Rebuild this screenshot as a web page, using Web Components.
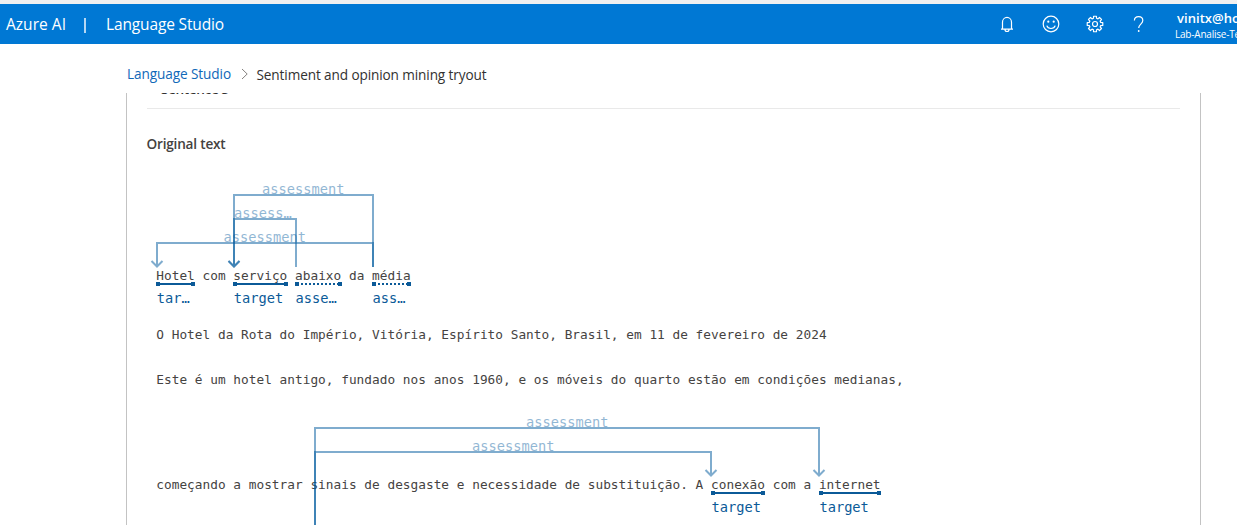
<!DOCTYPE html>
<html lang="en">
<head>
<meta charset="utf-8">
<title>Language Studio</title>
<style>
html,body{margin:0;height:100%;overflow:hidden;background:#fff}
body{font-family:"Open Sans","Noto Sans",sans-serif;color:#323130}
</style>
</head>
<body>
<studio-page></studio-page>
<script>
const define = (name, html, setup) => {
  const t = document.createElement('template');
  t.innerHTML = html;
  customElements.define(name, class extends HTMLElement {
    constructor() {
      super();
      this.attachShadow({mode: 'open'}).appendChild(t.content.cloneNode(true));
    }
    connectedCallback() { if (setup) setup(this, this.shadowRoot); }
  });
};

// One line of text whose tracking is adjusted to a given width.
define('fit-text', `<style>:host{display:block;white-space:pre;flex:none}span{display:inline-block}</style><span><slot></slot></span>`,
  (el, root) => {
    const span = root.querySelector('span');
    const want = +el.getAttribute('w');
    if (!want) return;
    const n = el.textContent.length;
    const have = span.getBoundingClientRect().width;
    if (have) span.style.letterSpacing = ((want - have) / n) + 'px';
  });

define('tool-icon', `<style>:host{display:flex;width:44px;height:40px;align-items:center;justify-content:center}svg{width:20px;height:20px;fill:none;stroke:#fff;stroke-width:1.2;overflow:visible}</style><svg viewBox="0 0 20 20"></svg>`,
  (el, root) => {
    const shapes = {
      bell: '<path d="M5.5 15V8.2a4.5 4.8 0 0 1 9 0V15M4 15.2h12M8 15.5a2 2 0 0 0 4 0"/>',
      smile: '<circle cx="10" cy="10" r="7.8"/><path d="M5.8 11.6a4.4 4.1 0 0 0 8.4 0"/><circle cx="7.3" cy="7.7" r="1.1" fill="#fff" stroke="none"/><circle cx="12.7" cy="7.7" r="1.1" fill="#fff" stroke="none"/>',
      help: '<path d="M5.4 6.6C5.4 4 7.2 2.6 9.6 2.6s4.2 1.5 4.2 3.9c0 3.4-4.1 3.9-4.1 7.6"/><circle cx="9.7" cy="17" r=".9" fill="#fff" stroke="none"/>'
    };
    const kind = el.getAttribute('kind');
    if (kind === 'gear') {
      const pts = [];
      for (let i = 0; i < 8; i++) {
        [[-15, 5.9], [-10.5, 7.9], [10.5, 7.9], [15, 5.9]].forEach(([d, r]) => {
          const a = (i * 45 + d) * Math.PI / 180;
          pts.push((10 + r * Math.cos(a)).toFixed(2) + ' ' + (10 + r * Math.sin(a)).toFixed(2));
        });
      }
      shapes.gear = '<path stroke-linejoin="round" d="M' + pts.join('L') + 'Z"/><circle cx="10" cy="10" r="2.5"/>';
    }
    root.querySelector('svg').innerHTML = shapes[kind];
  });

define('top-bar', `<style>
:host{display:flex;box-sizing:border-box;height:44px;border-top:4px solid #f0f0f0;background:#0078d4;color:#fff;overflow:hidden}
.brand{display:flex;flex:1;padding-left:6px;font-size:15.5px;line-height:40px}
.bar{width:2px;height:15px;margin:14px 20px 0 18px;background:#b5d7f3}
.tools{display:flex}
.user{width:76px;padding-left:14px;box-sizing:border-box;flex:none}
.mail{font-size:13px;font-weight:600;line-height:18px;padding:5px 0 0 2px}
.org{font-size:10px;line-height:14px}
</style>
<div class="brand"><fit-text w="60">Azure AI</fit-text><div class="bar"></div><fit-text w="118">Language Studio</fit-text></div>
<div class="tools"><tool-icon kind="bell"></tool-icon><tool-icon kind="smile"></tool-icon><tool-icon kind="gear"></tool-icon><tool-icon kind="help"></tool-icon></div>
<div class="user"><fit-text class="mail" w="63">vinitx@ho</fit-text><fit-text class="org" w="65">Lab-Analise-Te</fit-text></div>`);

define('bread-crumb', `<style>
:host{display:flex;box-sizing:border-box;height:49px;padding:20px 0 0 127px;font-size:13.6px;line-height:20px}
.link{color:#1068b8}
svg{width:8px;height:12px;margin:4px 8px 0 9.5px;fill:none;stroke:#85827f}
.here{padding-top:1px}
</style>
<fit-text class="link" w="104">Language Studio</fit-text>
<svg viewBox="0 0 8 12"><path d="M1 1l5.2 5L1 11"/></svg>
<fit-text class="here" w="230">Sentiment and opinion mining tryout</fit-text>`);

// A marked word: underline with square ends, and its role below.
define('text-token', `<style>
:host{display:inline-block;position:relative}
.mark{position:absolute;left:0;right:-.5px;top:100%;margin-top:-3px;height:4px}
.mark i{position:absolute;left:4px;right:4px;top:1px;height:2px;background:#0b5a98}
:host([dotted]) .mark i{background:repeating-linear-gradient(90deg,transparent 0 2px,#0b5a98 2px 4px)}
.mark::before,.mark::after{content:"";position:absolute;width:4px;height:4px;top:0;background:#0b5a98}
.mark::before{left:0}.mark::after{right:0}
.role{position:absolute;left:.5px;top:21px;font-size:13.7px;line-height:20px;letter-spacing:0;color:#0b5a98}
</style><slot></slot><span class="mark"><i></i></span><span class="role"></span>`,
  (el, root) => { root.querySelector('.role').textContent = el.getAttribute('role-name'); });

define('text-line', `<style>:host{display:block;white-space:pre;height:18px;line-height:18px}</style><slot></slot>`);

// Connectors between opinions and their targets.
define('relation-layer', `<style>
:host{position:absolute;inset:0;display:block;pointer-events:none}
svg{width:100%;height:100%;display:block}
g{fill:none;stroke:#005a9e;stroke-width:2}
path{opacity:.5}
text{font:13.7px "DejaVu Sans Mono",monospace;fill:#005a9e;opacity:.43}
</style><svg><g></g></svg>`,
  (el, root) => {
    const svg = root.querySelector('svg');
    const arcs = [
      [373, 174, 234, 102, 174, 262, 'assessment'],
      [296, 174, 234, 126, 174, 234, 'assess…'],
      [373, 174, 157, 150, 174, 223.5, 'assessment'],
      [315, 440, 819, 335, 383, 526, 'assessment'],
      [315, 440, 711, 359, 383, 472, 'assessment']
    ];
    svg.innerHTML = '<g>' + arcs.map(([x1, y1, x2, y, tip]) =>
      `<path d="M${x1 - 127} ${y1}V${y}H${x2 - 127}V${tip - .5}M${x2 - 132.5} ${tip - 6}l5.5 5.5l5.5 -5.5"/>`).join('') + '</g>' +
      arcs.map(([, , , y, , x, s]) => `<text x="${x - 127}" y="${y - 1}">${s}</text>`).join('');
  });

define('result-panel', `<style>
:host{display:block;position:relative;box-sizing:border-box;margin-left:126px;width:1075px;height:432px;border:solid #c3c3c3;border-width:0 1px;overflow:hidden}
.sentence{margin:-9px 0 0 34px;height:24px;font-size:13.6px;font-weight:600;line-height:10px}
.rule{margin:0 20px;height:1px;background:#e9e9e9}
h2{margin:25px 0 0 19.5px;font-size:13.6px;line-height:20px;font-weight:600;color:#444240}
.doc{padding-left:29.3px;font:12.785px "DejaVu Sans Mono",monospace;letter-spacing:.019px;color:#454342}
.a{margin-top:113px}.b{margin-top:41px}.c{margin-top:27px}.d{margin-top:87px}
</style>
<div class="sentence"><fit-text w="68">Sentence 3</fit-text></div>
<div class="rule"></div>
<h2><fit-text w="79">Original text</fit-text></h2>
<div class="doc">
<text-line class="a"><text-token role-name="tar…">Hotel</text-token> com <text-token role-name="target">serviço</text-token> <text-token dotted role-name="asse…">abaixo</text-token> da <text-token dotted role-name="ass…">média</text-token></text-line>
<text-line class="b">O Hotel da Rota do Império, Vitória, Espírito Santo, Brasil, em 11 de fevereiro de 2024</text-line>
<text-line class="c">Este é um hotel antigo, fundado nos anos 1960, e os móveis do quarto estão em condições medianas,</text-line>
<text-line class="d">começando a mostrar sinais de desgaste e necessidade de substituição. A <text-token role-name="target">conexão</text-token> com a <text-token role-name="target">internet</text-token></text-line>
</div>
<relation-layer></relation-layer>`);

define('studio-page', `<style>:host{display:block;width:100%;height:525px;overflow:hidden}</style><top-bar></top-bar><bread-crumb></bread-crumb><result-panel></result-panel>`);
</script>
</body>
</html>
